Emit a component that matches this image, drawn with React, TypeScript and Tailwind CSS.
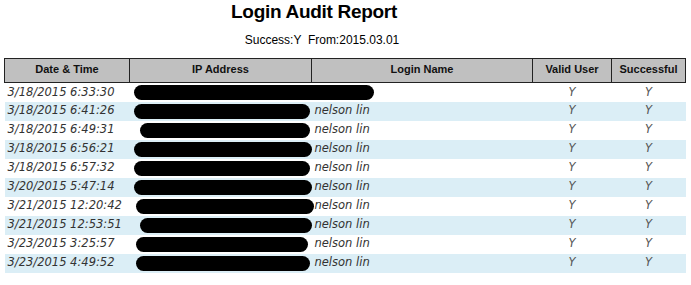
const rows = [
  { time: '3/18/2015 6:33:30', name: '', blob: [4, 240] },
  { time: '3/18/2015 6:41:26', name: 'nelson lin', blob: [4, 176] },
  { time: '3/18/2015 6:49:31', name: 'nelson lin', blob: [10, 170] },
  { time: '3/18/2015 6:56:21', name: 'nelson lin', blob: [4, 178] },
  { time: '3/18/2015 6:57:32', name: 'nelson lin', blob: [4, 176] },
  { time: '3/20/2015 5:47:14', name: 'nelson lin', blob: [4, 178] },
  { time: '3/21/2015 12:20:42', name: 'nelson lin', blob: [6, 178] },
  { time: '3/21/2015 12:53:51', name: 'nelson lin', blob: [10, 172] },
  { time: '3/23/2015 3:25:57', name: 'nelson lin', blob: [6, 172] },
  { time: '3/23/2015 4:49:52', name: 'nelson lin', blob: [6, 174] },
];

export default function App() {
  return (
    <div className="w-[691px] h-[285px] bg-white overflow-hidden font-['Liberation_Sans',Arial,sans-serif]">
      <h1 className="text-center text-[19px] leading-[24px] font-bold text-black ml-[-63px] tracking-[-0.3px]">Login Audit Report</h1>
      <p className="mt-[10px] text-center text-[12px] leading-[13px] text-black ml-[-47px] whitespace-pre">Success:Y  From:2015.03.01</p>
      <table className="mt-[11px] ml-[4px] w-[681px] border-collapse table-fixed">
        <colgroup>
          <col className="w-[125px]" />
          <col className="w-[182px]" />
          <col className="w-[221px]" />
          <col className="w-[79px]" />
          <col className="w-[74px]" />
        </colgroup>
        <thead>
          <tr className="bg-[#c0c0c0] h-[24px]">
            {['Date & Time', 'IP Address', 'Login Name', 'Valid User', 'Successful'].map((h) => (
              <th key={h} className="border border-[#222] text-[11px] font-bold text-[#111] text-center p-0 pb-[2px]">
                {h}
              </th>
            ))}
          </tr>
        </thead>
        <tbody className="font-['DejaVu_Sans',Verdana,sans-serif] italic text-[11.5px] text-[#333]">
          {rows.map((r, i) => (
            <tr key={r.time} className={`h-[19px] ${i % 2 ? 'bg-[#dbeef6]' : 'bg-white'}`}>
              <td className="pl-[3px] p-0 whitespace-nowrap">{r.time}</td>
              <td className="p-0 relative">
                <div
                  className="absolute top-[2px] h-[15px] rounded-full bg-black z-10"
                  style={{ left: r.blob[0], width: r.blob[1] }}
                />
              </td>
              <td className="pl-[3px] p-0 whitespace-nowrap">{r.name}</td>
              <td className="p-0 text-center text-[#555]">Y</td>
              <td className="p-0 text-center text-[#555]">Y</td>
            </tr>
          ))}
        </tbody>
      </table>
    </div>
  );
}
